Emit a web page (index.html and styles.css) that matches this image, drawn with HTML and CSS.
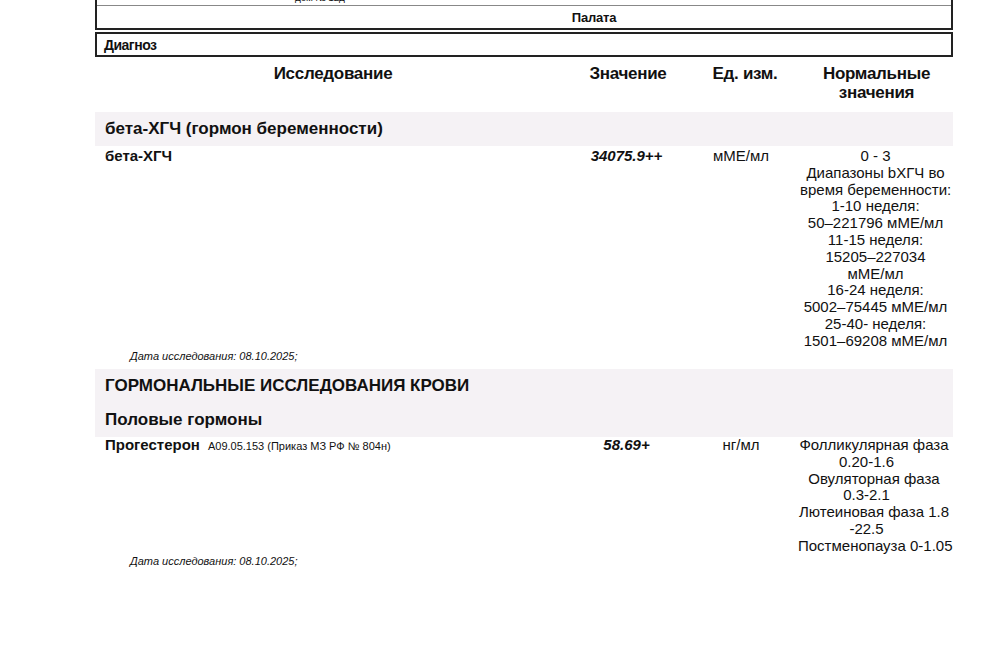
FILE: index.html
```html
<!DOCTYPE html>
<html lang="ru">
<head>
<meta charset="utf-8">
<link rel="stylesheet" href="styles.css">
</head>
<body>
<div class="sheet">
  <div class="topbox">
    <div class="addr-row"><span class="addr">дом № 12д</span></div>
    <div class="ward-row"><span class="ward-cell">Палата</span></div>
  </div>
  <div class="diag">Диагноз</div>

  <div class="grid head">
    <div class="c-name">Исследование</div>
    <div class="c-val">Значение</div>
    <div class="c-unit">Ед. изм.</div>
    <div class="c-norm">Нормальные<br>значения</div>
  </div>

  <div class="band">
    <div class="band-title">бета-ХГЧ (гормон беременности)</div>
  </div>
  <div class="grid row">
    <div class="c-name"><b>бета-ХГЧ</b></div>
    <div class="c-val val">34075.9++</div>
    <div class="c-unit">мМЕ/мл</div>
    <div class="c-norm">0 - 3<br>Диапазоны bХГЧ во<br>время беременности:<br>1-10 неделя:<br>50–221796 мМЕ/мл<br>11-15 неделя:<br>15205–227034<br>мМЕ/мл<br>16-24 неделя:<br>5002–75445 мМЕ/мл<br>25-40- неделя:<br>1501–69208 мМЕ/мл</div>
  </div>
  <div class="date">Дата исследования: 08.10.2025;</div>

  <div class="band">
    <div class="band-title caps">ГОРМОНАЛЬНЫЕ ИССЛЕДОВАНИЯ КРОВИ</div>
    <div class="band-title">Половые гормоны</div>
  </div>
  <div class="grid row row-tight">
    <div class="c-name"><b>Прогестерон</b><span class="code">A09.05.153 (Приказ МЗ РФ № 804н)</span></div>
    <div class="c-val val">58.69+</div>
    <div class="c-unit">нг/мл</div>
    <div class="c-norm norm-shift"><span class="ln">Фолликулярная фаза</span><span class="ln short">0.20-1.6</span><span class="ln">Овуляторная фаза</span><span class="ln short">0.3-2.1</span><span class="ln">Лютеиновая фаза 1.8</span><span class="ln short">-22.5</span><span class="ln">Постменопауза 0-1.05</span></div>
  </div>
  <div class="date">Дата исследования: 08.10.2025;</div>
</div>
</body>
</html>
```
FILE: styles.css
```css
html, body {
  margin: 0;
  padding: 0;
  background: #fff;
}
body {
  font-family: "Liberation Sans", Arial, sans-serif;
  color: #111;
}
.sheet {
  width: 858px;
  margin-left: 95px;
}
.topbox {
  margin-top: -7px;
  border-left: 2px solid #222;
  border-right: 2px solid #222;
  border-bottom: 2px solid #222;
}
.addr-row {
  height: 12px;
  border-bottom: 1px solid #888;
  padding-left: 198px;
  font-size: 10px;
  letter-spacing: -0.2px;
  line-height: 10px;
}
.ward-row {
  display: flex;
  height: 22px;
  align-items: center;
  padding-left: 140px;
}
.ward-cell {
  flex: 1;
  text-align: center;
  font-weight: bold;
  font-size: 13px;
  letter-spacing: -0.2px;
}
.diag {
  margin-top: 2px;
  border: 2px solid #222;
  height: 21px;
  line-height: 22px;
  padding-left: 7px;
  font-weight: bold;
  font-size: 14px;
  letter-spacing: -0.5px;
}
.grid {
  display: grid;
  grid-template-columns: 476px 111px 118px 153px;
}
.head {
  padding-top: 7px;
  height: 48px;
  font-weight: bold;
  font-size: 17px;
  letter-spacing: -0.3px;
  line-height: 19px;
  text-align: center;
}
.head .c-val {
  padding-left: 3px;
}
.head .c-unit {
  padding-left: 8px;
}
.band {
  background: #f5f2f5;
  padding-left: 10px;
}
.band-title {
  height: 34px;
  line-height: 34px;
  font-weight: bold;
  font-size: 17px;
}
.row {
  padding-top: 2px;
  font-size: 15px;
  line-height: 16.8px;
}
.row-tight {
  padding-top: 0;
}
.row .c-name {
  padding-left: 10px;
}
.row .c-val, .row .c-unit, .row .c-norm {
  text-align: center;
  white-space: nowrap;
}
.row .c-norm {
  padding-right: 2px;
}
.row .norm-shift {
  margin-left: -2px;
  padding-right: 3px;
}
.ln {
  display: block;
}
.ln.short {
  padding-right: 15px;
}
.val {
  font-weight: bold;
  font-style: italic;
}
.code {
  font-size: 11px;
  margin-left: 8px;
}
.date {
  padding-left: 35px;
  height: 19.5px;
  line-height: 12px;
  font-size: 11px;
  font-style: italic;
}
```
